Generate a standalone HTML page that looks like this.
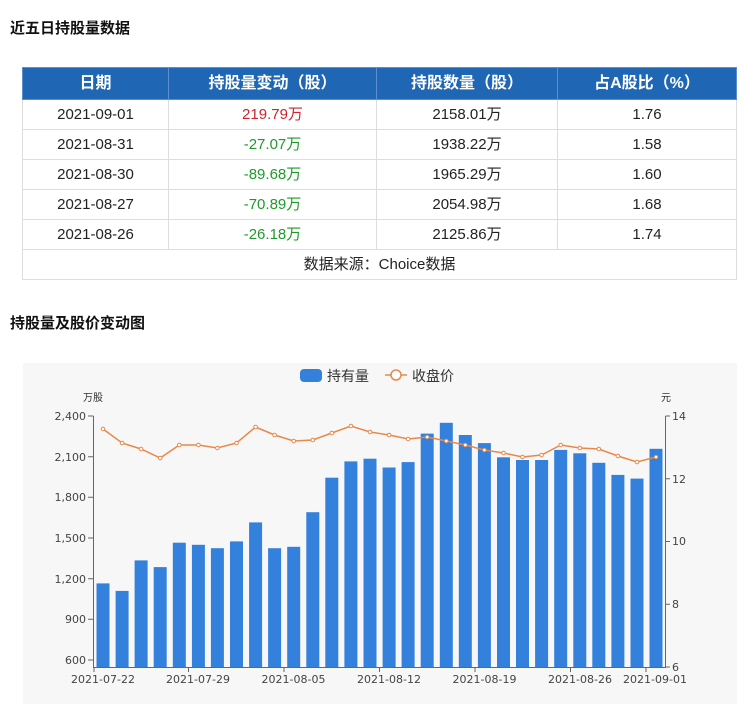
<!DOCTYPE html>
<html><head><meta charset="utf-8">
<style>
body{margin:0;background:#fff;font-family:"Liberation Sans","Noto Sans CJK SC",sans-serif;width:747px;height:704px;overflow:hidden;position:relative}
h2{position:absolute;margin:0;font-size:15px;font-weight:bold;color:#111;left:10px}
table{position:absolute;left:22px;top:67px;width:715px;border-collapse:collapse;font-size:15px;color:#222}
th{background:#1f66b4;color:#fff;font-weight:bold;height:31px;line-height:31px;border:1px solid #5a8fd0;padding:0;font-size:16px}
td{height:29px;line-height:29px;border:1px solid #ddd;text-align:center;padding:0;vertical-align:middle}
.r{color:#d0232a}.g{color:#1f9a2a}
</style></head><body>
<h2 style="top:17px">近五日持股量数据</h2>
<table>
<tr><th style="width:145px">日期</th><th style="width:207px">持股量变动（股）</th><th style="width:180px">持股数量（股）</th><th>占A股比（%）</th></tr>
<tr><td>2021-09-01</td><td class="r">219.79万</td><td>2158.01万</td><td>1.76</td></tr>
<tr><td>2021-08-31</td><td class="g">-27.07万</td><td>1938.22万</td><td>1.58</td></tr>
<tr><td>2021-08-30</td><td class="g">-89.68万</td><td>1965.29万</td><td>1.60</td></tr>
<tr><td>2021-08-27</td><td class="g">-70.89万</td><td>2054.98万</td><td>1.68</td></tr>
<tr><td>2021-08-26</td><td class="g">-26.18万</td><td>2125.86万</td><td>1.74</td></tr>
<tr><td colspan="4">数据来源：Choice数据</td></tr>
</table>
<h2 style="top:312px">持股量及股价变动图</h2>
<svg style="position:absolute;left:0;top:0" width="747" height="704" font-family="DejaVu Sans, Noto Sans CJK SC, sans-serif">
<rect x="23" y="363" width="714" height="341" fill="#f7f7f7"/>
<rect x="300" y="369" width="22" height="13" rx="4" fill="#3380dd"/>
<text x="327" y="381" font-size="14" fill="#333">持有量</text>
<line x1="385" y1="375" x2="407" y2="375" stroke="#e8894a" stroke-width="1.5"/>
<circle cx="396" cy="375" r="5" fill="#fff" stroke="#e8894a" stroke-width="1.5"/>
<text x="412" y="381" font-size="14" fill="#333">收盘价</text>
<text x="83" y="401" font-size="10" fill="#333">万股</text>
<text x="661" y="401" font-size="10" fill="#333">元</text>
<g fill="#3380dd">
<rect x="96.5" y="583.4" width="13" height="83.6"/>
<rect x="115.6" y="590.9" width="13" height="76.1"/>
<rect x="134.6" y="560.4" width="13" height="106.6"/>
<rect x="153.7" y="567.1" width="13" height="99.9"/>
<rect x="172.8" y="542.7" width="13" height="124.3"/>
<rect x="191.9" y="544.8" width="13" height="122.2"/>
<rect x="210.9" y="548.2" width="13" height="118.8"/>
<rect x="230.0" y="541.4" width="13" height="125.6"/>
<rect x="249.1" y="522.4" width="13" height="144.6"/>
<rect x="268.1" y="548.2" width="13" height="118.8"/>
<rect x="287.2" y="546.8" width="13" height="120.2"/>
<rect x="306.3" y="512.2" width="13" height="154.8"/>
<rect x="325.3" y="477.7" width="13" height="189.3"/>
<rect x="344.4" y="461.4" width="13" height="205.6"/>
<rect x="363.5" y="458.7" width="13" height="208.3"/>
<rect x="382.6" y="467.5" width="13" height="199.5"/>
<rect x="401.6" y="462.1" width="13" height="204.9"/>
<rect x="420.7" y="433.6" width="13" height="233.4"/>
<rect x="439.8" y="422.8" width="13" height="244.2"/>
<rect x="458.8" y="435.0" width="13" height="232"/>
<rect x="477.9" y="443.1" width="13" height="223.9"/>
<rect x="497.0" y="457.3" width="13" height="209.7"/>
<rect x="516.0" y="460.0" width="13" height="207"/>
<rect x="535.1" y="460.0" width="13" height="207"/>
<rect x="554.2" y="449.9" width="13" height="217.1"/>
<rect x="573.3" y="453.3" width="13" height="213.7"/>
<rect x="592.3" y="462.8" width="13" height="204.2"/>
<rect x="611.4" y="474.9" width="13" height="192.1"/>
<rect x="630.5" y="478.6" width="13" height="188.4"/>
<rect x="649.5" y="448.8" width="13" height="218.2"/>
</g>
<polyline fill="none" stroke="#e8894a" stroke-width="1.5" points="103,429 122.1,443 141.1,449 160.2,458 179.3,445 198.4,445 217.4,448 236.5,443 255.6,427 274.6,435 293.7,441 312.8,440 331.8,433 350.9,426 370,432 389.1,435 408.1,439 427.2,437 446.3,441 465.3,445 484.4,450 503.5,453 522.5,457 541.6,455 560.7,445 579.8,448 598.8,449 617.9,456 637,462 656,457"/>
<g fill="#fff" stroke="#e8894a" stroke-width="1">
<circle cx="103" cy="429" r="1.8"/><circle cx="122.1" cy="443" r="1.8"/><circle cx="141.1" cy="449" r="1.8"/><circle cx="160.2" cy="458" r="1.8"/><circle cx="179.3" cy="445" r="1.8"/><circle cx="198.4" cy="445" r="1.8"/><circle cx="217.4" cy="448" r="1.8"/><circle cx="236.5" cy="443" r="1.8"/><circle cx="255.6" cy="427" r="1.8"/><circle cx="274.6" cy="435" r="1.8"/><circle cx="293.7" cy="441" r="1.8"/><circle cx="312.8" cy="440" r="1.8"/><circle cx="331.8" cy="433" r="1.8"/><circle cx="350.9" cy="426" r="1.8"/><circle cx="370" cy="432" r="1.8"/><circle cx="389.1" cy="435" r="1.8"/><circle cx="408.1" cy="439" r="1.8"/><circle cx="427.2" cy="437" r="1.8"/><circle cx="446.3" cy="441" r="1.8"/><circle cx="465.3" cy="445" r="1.8"/><circle cx="484.4" cy="450" r="1.8"/><circle cx="503.5" cy="453" r="1.8"/><circle cx="522.5" cy="457" r="1.8"/><circle cx="541.6" cy="455" r="1.8"/><circle cx="560.7" cy="445" r="1.8"/><circle cx="579.8" cy="448" r="1.8"/><circle cx="598.8" cy="449" r="1.8"/><circle cx="617.9" cy="456" r="1.8"/><circle cx="637" cy="462" r="1.8"/><circle cx="656" cy="457" r="1.8"/>
</g>
<g stroke="#666" stroke-width="1" fill="none">
<path d="M93.5 416V667.5H665.5V416"/>
<path d="M88 416H93.5M88 456.7H93.5M88 497.3H93.5M88 538H93.5M88 578.7H93.5M88 619.3H93.5M88 660H93.5"/>
<path d="M665.5 416H670M665.5 478.75H670M665.5 541.5H670M665.5 604.25H670M665.5 667H670"/>
<path d="M94 667V672M188.5 667V672M284 667V672M379.5 667V672M475 667V672M570.5 667V672M646 667V672"/>
</g>
<g font-size="11" fill="#444" text-anchor="end">
<text x="86" y="420">2,400</text><text x="86" y="461">2,100</text><text x="86" y="501">1,800</text><text x="86" y="542">1,500</text><text x="86" y="583">1,200</text><text x="86" y="623">900</text><text x="86" y="664">600</text>
</g>
<g font-size="11" fill="#444">
<text x="672" y="420">14</text><text x="672" y="483">12</text><text x="672" y="545">10</text><text x="672" y="608">8</text><text x="672" y="671">6</text>
</g>
<g font-size="11" fill="#444" text-anchor="middle">
<text x="103" y="683">2021-07-22</text><text x="198" y="683">2021-07-29</text><text x="293.5" y="683">2021-08-05</text><text x="389" y="683">2021-08-12</text><text x="484.5" y="683">2021-08-19</text><text x="580" y="683">2021-08-26</text><text x="655" y="683">2021-09-01</text>
</g>
</svg>
</body></html>
